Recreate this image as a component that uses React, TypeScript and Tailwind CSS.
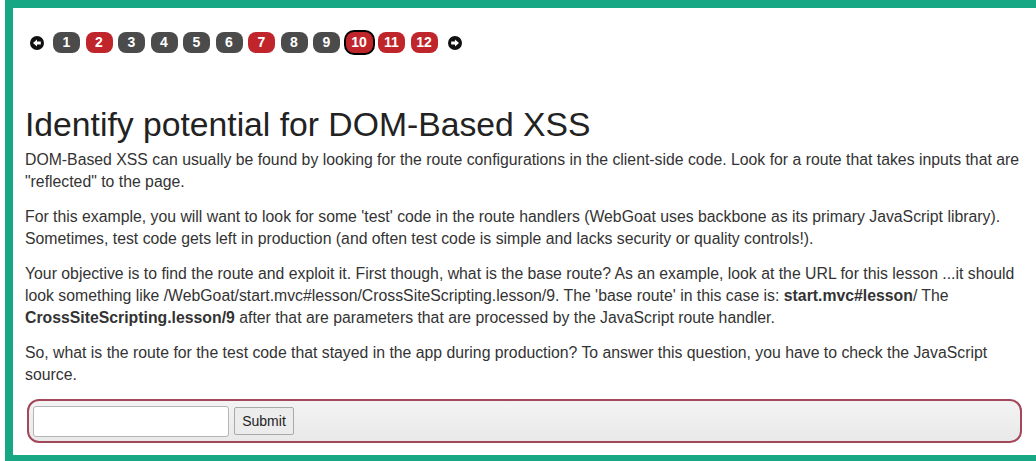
const pages = [
  { n: 1, red: false },
  { n: 2, red: true },
  { n: 3, red: false },
  { n: 4, red: false },
  { n: 5, red: false },
  { n: 6, red: false },
  { n: 7, red: true },
  { n: 8, red: false },
  { n: 9, red: false },
  { n: 10, red: true, current: true },
  { n: 11, red: true },
  { n: 12, red: true },
];

function Arrow({ dir }: { dir: "left" | "right" }) {
  return (
    <svg width="14" height="14" viewBox="0 0 14 14" className="shrink-0">
      <circle cx="7" cy="7" r="7" fill="#111" />
      {dir === "left" ? (
        <path d="M3 7 L7 3.5 L7 5.6 L10.8 5.6 L10.8 8.4 L7 8.4 L7 10.5 Z" fill="#fff" />
      ) : (
        <path d="M11 7 L7 3.5 L7 5.6 L3.2 5.6 L3.2 8.4 L7 8.4 L7 10.5 Z" fill="#fff" />
      )}
    </svg>
  );
}

export default function App() {
  return (
    <div className="w-[1036px] h-[461px] bg-white pl-[5px] overflow-hidden font-['Liberation_Sans',Arial,sans-serif]">
      <div className="h-full border-t-[8px] border-l-[8px] border-b-[6px] border-[#17a784] bg-white pl-[12px] pr-[8px] text-[#333]">
        {/* lesson page nav */}
        <div className="flex items-center pt-[24px] pl-[5px]">
          <Arrow dir="left" />
          <div className="ml-[9px] flex items-center gap-[5.5px]">
            {pages.map((p) => (
              <span
                key={p.n}
                className={
                  "flex h-[21px] w-[27px] items-center justify-center rounded-[8px] text-[14px] font-bold text-white " +
                  (p.red ? "bg-[#c0252c] " : "bg-[#4b4b4b] ") +
                  (p.current ? "ring-[2px] ring-black" : "")
                }
              >
                {p.n}
              </span>
            ))}
          </div>
          <div className="ml-[10px]">
            <Arrow dir="right" />
          </div>
        </div>

        <h2 className="mt-[51px] text-[33.7px] leading-[40px] text-[#222]">Identify potential for DOM-Based XSS</h2>

        <div className="mt-[5px] text-[15.8px] leading-[22px]">
          <p>
            DOM-Based XSS can usually be found by looking for the route configurations in the client-side code. Look for a route that takes inputs that are
            "reflected" to the page.
          </p>
          <p className="mt-[13px]">
            For this example, you will want to look for some 'test' code in the route handlers (WebGoat uses backbone as its primary JavaScript library).
            Sometimes, test code gets left in production (and often test code is simple and lacks security or quality controls!).
          </p>
          <p className="mt-[13px]">
            Your objective is to find the route and exploit it. First though, what is the base route? As an example, look at the URL for this lesson ...it should
            look something like /WebGoat/start.mvc#lesson/CrossSiteScripting.lesson/9. The 'base route' in this case is: <b>start.mvc#lesson</b>/ The{" "}
            <b>CrossSiteScripting.lesson/9</b> after that are parameters that are processed by the JavaScript route handler.
          </p>
          <p className="mt-[13px]">
            So, what is the route for the test code that stayed in the app during production? To answer this question, you have to check the JavaScript
            source.
          </p>
        </div>

        <form className="mt-[13px] ml-[2px] flex h-[44px] w-[995px] items-center gap-[5px] rounded-[12px] border-[2px] border-[#a3485a] bg-gradient-to-b from-[#f3f3f3] to-[#e9e9e9] px-[4px]">
          <input type="text" className="h-[31px] w-[196px] rounded-[3px] border border-[#b5b5b5] bg-white" />
          <button type="button" className="h-[28px] w-[60px] rounded-[2px] border border-[#a9a9a9] bg-[#ececec] text-[14px] text-[#222]">
            Submit
          </button>
        </form>
      </div>
    </div>
  );
}
